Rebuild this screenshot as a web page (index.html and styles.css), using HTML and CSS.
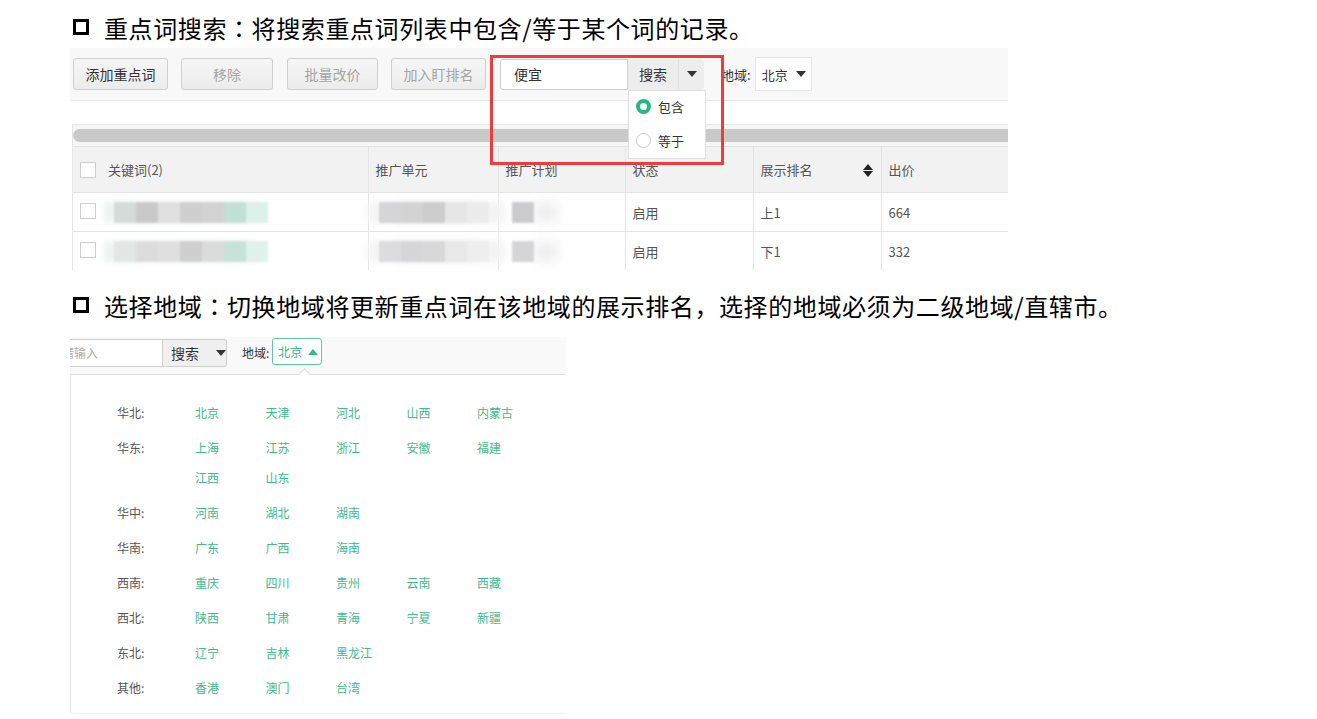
FILE: index.html
```html
<!DOCTYPE html>
<html lang="zh-CN">
<head>
    <meta charset="UTF-8">
    <meta name="viewport" content="width=device-width, initial-scale=1.0">
    <link rel="stylesheet" href="styles.css">
</head>
<body>
<div class="doc">

    <!-- Section 1: keyword search -->
    <h3 class="tip"><span class="tip-box"></span>重点词搜索<span class="colon">：</span>将搜索重点词列表中包含/等于某个词的记录。</h3>

    <div class="shot shot-kw">
        <div class="kw-toolbar">
            <button class="btn btn-add">添加重点词</button>
            <button class="btn btn-remove is-disabled">移除</button>
            <button class="btn btn-price is-disabled">批量改价</button>
            <button class="btn btn-rank is-disabled">加入盯排名</button>

            <div class="search">
                <div class="search-input">便宜</div>
                <div class="search-btn">搜索</div>
                <div class="search-caret"><span class="caret-down"></span></div>
                <!-- match mode menu -->
                <ul class="search-menu">
                    <li><span class="radio is-checked"></span>包含</li>
                    <li><span class="radio"></span>等于</li>
                </ul>
            </div>

            <span class="region-label">地域:</span>
            <div class="region-select">北京<span class="caret-down"></span></div>
        </div>

        <div class="kw-body">
            <div class="hscroll"><div class="hscroll-thumb"></div></div>
            <table class="kw-table">
                <colgroup>
                    <col class="c-kw"><col class="c-unit"><col class="c-plan">
                    <col class="c-state"><col class="c-rank"><col class="c-bid">
                </colgroup>
                <thead>
                    <tr>
                        <th><span class="check"></span>关键词(2)</th>
                        <th>推广单元</th>
                        <th>推广计划</th>
                        <th>状态</th>
                        <th class="sortable">展示排名<span class="sort-icon"></span></th>
                        <th>出价</th>
                    </tr>
                </thead>
                <tbody>
                    <tr>
                        <td><span class="check"></span><span class="mosaic mosaic-kw"></span></td>
                        <td><span class="mosaic mosaic-unit"></span></td>
                        <td><span class="mosaic mosaic-plan"></span></td>
                        <td>启用</td>
                        <td>上1</td>
                        <td>664</td>
                    </tr>
                    <tr>
                        <td><span class="check"></span><span class="mosaic mosaic-kw mosaic-light"></span></td>
                        <td><span class="mosaic mosaic-unit mosaic-light"></span></td>
                        <td><span class="mosaic mosaic-plan mosaic-light"></span></td>
                        <td>启用</td>
                        <td>下1</td>
                        <td>332</td>
                    </tr>
                </tbody>
            </table>
        </div>

        <div class="highlight"></div>
    </div>

    <!-- Section 2: region picker -->
    <h3 class="tip tip-second"><span class="tip-box"></span>选择地域<span class="colon">：</span>切换地域将更新重点词在该地域的展示排名，选择的地域必须为二级地域/直辖市。</h3>

    <div class="shot shot-region">
        <div class="rg-toolbar">
            <div class="rg-input">请输入</div>
            <div class="rg-search">搜索<span class="caret-down"></span></div>
            <span class="rg-label">地域:</span>
            <div class="rg-select">北京<span class="caret-up"></span></div>
        </div>
        <span class="rg-notch"></span>

        <div class="rg-panel">
            <div class="rg-group">
                <span class="rg-name">华北:</span>
                <div class="rg-cities"><a>北京</a><a>天津</a><a>河北</a><a>山西</a><a>内蒙古</a></div>
            </div>
            <div class="rg-group">
                <span class="rg-name">华东:</span>
                <div class="rg-cities"><a>上海</a><a>江苏</a><a>浙江</a><a>安徽</a><a>福建</a><a>江西</a><a>山东</a></div>
            </div>
            <div class="rg-group">
                <span class="rg-name">华中:</span>
                <div class="rg-cities"><a>河南</a><a>湖北</a><a>湖南</a></div>
            </div>
            <div class="rg-group">
                <span class="rg-name">华南:</span>
                <div class="rg-cities"><a>广东</a><a>广西</a><a>海南</a></div>
            </div>
            <div class="rg-group">
                <span class="rg-name">西南:</span>
                <div class="rg-cities"><a>重庆</a><a>四川</a><a>贵州</a><a>云南</a><a>西藏</a></div>
            </div>
            <div class="rg-group">
                <span class="rg-name">西北:</span>
                <div class="rg-cities"><a>陕西</a><a>甘肃</a><a>青海</a><a>宁夏</a><a>新疆</a></div>
            </div>
            <div class="rg-group">
                <span class="rg-name">东北:</span>
                <div class="rg-cities"><a>辽宁</a><a>吉林</a><a>黑龙江</a></div>
            </div>
            <div class="rg-group">
                <span class="rg-name">其他:</span>
                <div class="rg-cities"><a>香港</a><a>澳门</a><a>台湾</a></div>
            </div>
        </div>
    </div>

</div>
</body>
</html>
```

FILE: styles.css
```css
body {
    margin: 0;
    background: #fff;
    font-family: "Noto Sans CJK SC", "Liberation Sans", sans-serif;
    color: #333;
}
.doc {
    padding: 8px 0 0 70px;
}

/* section titles */
.tip {
    display: flex;
    align-items: center;
    margin: 0;
    height: 38px;
    font-size: 24px;
    font-weight: normal;
    letter-spacing: 0.6px;
    color: #000;
    white-space: nowrap;
}
.tip-box {
    width: 10px;
    height: 10px;
    border: 3px solid #000;
    margin: 0 15px 0 3px;
    flex: none;
}
.tip-second {
    margin-top: 16px;
}
/* centred full-width colon */
.colon {
    font-family: "Noto Sans CJK JP", "Noto Sans CJK SC", sans-serif;
}

.shot {
    position: relative;
    overflow: hidden;
}

/* ---------- screenshot 1 ---------- */
.shot-kw {
    width: 938px;
    height: 222px;
    margin-top: 2px;
}
.kw-toolbar {
    display: flex;
    align-items: center;
    height: 52px;
    padding-left: 3px;
    background: #f8f8f8;
    border-bottom: 1px solid #e6e6e6;
    font-size: 14px;
}
.btn {
    height: 32px;
    margin-right: 13px;
    padding: 0;
    font-family: inherit;
    font-size: 14px;
    color: #333;
    background: linear-gradient(#f6f6f6, #ececec);
    border: 1px solid #cfcfcf;
    border-radius: 3px;
}
.btn.is-disabled {
    color: #a5a5a5;
}
.btn-add { width: 95px; }
.btn-remove { width: 92px; margin-right: 14px; }
.btn-price { width: 91px; }
.btn-rank { width: 95px; margin-right: 14px; }

.search {
    position: relative;
    display: flex;
    height: 31px;
}
.search-input {
    width: 113px;
    padding-left: 13px;
    line-height: 29px;
    background: #fff;
    border: 1px solid #d0d0d0;
    border-radius: 3px 0 0 3px;
}
.search-btn {
    width: 50px;
    line-height: 31px;
    text-align: center;
    background: #ededed;
    border-right: 1px solid #e2e2e2;
}
.search-caret {
    display: flex;
    align-items: center;
    justify-content: center;
    width: 25px;
    background: #ededed;
    border-radius: 0 3px 3px 0;
}
.caret-down {
    width: 0;
    height: 0;
    border-left: 5px solid transparent;
    border-right: 5px solid transparent;
    border-top: 6px solid #333;
}
.caret-up {
    width: 0;
    height: 0;
    border-left: 5px solid transparent;
    border-right: 5px solid transparent;
    border-bottom: 6px solid #35b98a;
}
.search-menu {
    position: absolute;
    top: 31px;
    left: 128px;
    width: 76px;
    margin: 0;
    padding: 0;
    list-style: none;
    background: #fff;
    border: 1px solid #e0e0e0;
    z-index: 2;
}
.search-menu li {
    display: flex;
    align-items: center;
    height: 34px;
    padding-left: 7px;
    font-size: 13px;
    color: #333;
}
.search-menu li:first-child {
    margin-top: -1px;
}
.radio {
    box-sizing: border-box;
    width: 15px;
    height: 15px;
    margin-right: 7px;
    border: 1px solid #c8c8c8;
    border-radius: 50%;
    background: #fff;
}
.radio.is-checked {
    border: 4px solid #25b884;
}

.region-label {
    margin-left: 17px;
    font-size: 13px;
    color: #333;
}
.region-select {
    display: flex;
    align-items: center;
    gap: 8px;
    box-sizing: border-box;
    width: 57px;
    height: 34px;
    margin-left: 4px;
    padding-left: 6px;
    font-size: 13px;
    background: #fff;
    border: 1px solid #e6e6e6;
}

.kw-body {
    margin: 23px 0 0 2px;
    border-left: 1px solid #e6e6e6;
}
.hscroll {
    height: 22px;
    padding-top: 4px;
    box-sizing: border-box;
    background: #f6f6f6;
    border-top: 1px solid #e9e9e9;
}
.hscroll-thumb {
    height: 13px;
    width: 960px;
    border-radius: 7px;
    background: #c9c9c9;
}

.kw-table {
    border-collapse: collapse;
    table-layout: fixed;
    width: 1000px;
    font-size: 13px;
    color: #555;
}
.c-kw { width: 295px; }
.c-unit { width: 130px; }
.c-plan { width: 127px; }
.c-state { width: 128px; }
.c-rank { width: 128px; }
.c-bid { width: 192px; }
.kw-table th,
.kw-table td {
    padding: 0 7px;
    text-align: left;
    font-weight: normal;
    white-space: nowrap;
    border-right: 1px solid #e4e4e4;
    border-bottom: 1px solid #e4e4e4;
}
.kw-table th {
    height: 45px;
    background: #f2f2f2;
    border-top: 1px solid #e4e4e4;
}
.kw-table td {
    height: 38px;
    background: #fff;
}
.check {
    display: inline-block;
    box-sizing: border-box;
    width: 16px;
    height: 16px;
    margin-right: 12px;
    vertical-align: -3px;
    background: #fff;
    border: 1px solid #cdcdcd;
}
.sortable {
    position: relative;
}
.sort-icon {
    position: absolute;
    right: 8px;
    top: 17px;
    width: 0;
    height: 0;
    border-left: 5px solid transparent;
    border-right: 5px solid transparent;
    border-bottom: 6px solid #222;
}
.sort-icon::after {
    content: "";
    position: absolute;
    left: -5px;
    top: 7px;
    border-left: 5px solid transparent;
    border-right: 5px solid transparent;
    border-top: 6px solid #222;
}

/* blurred cell contents */
.mosaic {
    display: inline-block;
    height: 21px;
    vertical-align: middle;
    filter: blur(0.8px);
}
.mosaic-kw {
    width: 154px;
    margin-left: 6px;
    background: linear-gradient(to right,
        #d3dcd9 0 22px, #c9c9c9 22px 44px, #e0e0e0 44px 66px, #cfcfcf 66px 88px,
        #d2d2d2 88px 110px, #c2e0d6 110px 132px, #dbf1e9 132px 154px);
    box-shadow: -10px 0 6px #eef3f1;
}
.mosaic-kw.mosaic-light {
    background: linear-gradient(to right,
        #e2e6e5 0 22px, #dcdcdc 22px 44px, #dfdfdf 44px 66px, #cfcfcf 66px 88px,
        #dbdbdb 88px 110px, #c6e2d9 110px 132px, #dff2eb 132px 154px);
}
.mosaic-unit {
    width: 110px;
    margin-left: 3px;
    background: linear-gradient(to right,
        #d5d5d7 0 22px, #d3d3d4 22px 44px, #cdcdcd 44px 66px, #e6e6e6 66px 88px, #ececec 88px 110px);
    box-shadow: 16px 0 10px #f3f3f3, -12px 0 8px #f4f4f4;
}
.mosaic-unit.mosaic-light {
    background: linear-gradient(to right,
        #dcdcde 0 22px, #d6d6d8 22px 44px, #d8d8d8 44px 66px, #e8e8e8 66px 88px, #eeeeee 88px 110px);
}
.mosaic-plan {
    width: 22px;
    margin-left: 6px;
    background: #cbcbcd;
    box-shadow: 24px 0 12px #eeeeee;
}
.mosaic-plan.mosaic-light {
    background: #d5d5d7;
}

.highlight {
    position: absolute;
    left: 420px;
    top: 7px;
    width: 228px;
    height: 104px;
    border: 3px solid #f13b3b;
    z-index: 3;
}

/* ---------- screenshot 2 ---------- */
.shot-region {
    width: 496px;
    height: 381px;
    margin-top: 13px;
}
.rg-toolbar {
    display: flex;
    align-items: flex-start;
    height: 38px;
    padding-top: 1px;
    box-sizing: border-box;
    margin-left: -12px;
    background: #f9f9f9;
    border-bottom: 1px solid #e2e2e2;
    font-size: 12px;
    white-space: nowrap;
}
.rg-input {
    box-sizing: border-box;
    width: 105px;
    height: 28px;
    margin-top: 1px;
    padding-left: 3px;
    line-height: 26px;
    color: #aaa;
    background: #fff;
    border: 1px solid #cfcfcf;
}
.rg-search {
    display: flex;
    align-items: center;
    gap: 17px;
    flex: none;
    box-sizing: border-box;
    width: 64px;
    height: 28px;
    margin-top: 1px;
    padding-left: 8px;
    font-size: 14px;
    color: #333;
    background: #f0f0f0;
    border: 1px solid #cfcfcf;
    border-left: none;
    border-radius: 0 3px 3px 0;
}
.rg-label {
    margin: 6px 0 0 15px;
    color: #333;
}
.rg-select {
    display: flex;
    align-items: center;
    gap: 6px;
    box-sizing: border-box;
    width: 50px;
    height: 27px;
    margin-left: 3px;
    padding-left: 5px;
    color: #35b98a;
    background: #fff;
    border: 1px solid #5ccaa0;
    border-radius: 3px;
}
.rg-notch {
    position: absolute;
    left: 230px;
    top: 33px;
    width: 8px;
    height: 8px;
    background: #fff;
    border-left: 1px solid #dcdcdc;
    border-top: 1px solid #dcdcdc;
    transform: rotate(45deg);
}
.rg-panel {
    height: 339px;
    padding: 23px 0 0 46px;
    box-sizing: border-box;
    border-left: 1px solid #e0e0e0;
    border-bottom: 1px solid #f0f0f0;
    border-radius: 0 0 0 4px;
    font-size: 12px;
}
.rg-group {
    display: flex;
    margin-bottom: 5px;
    line-height: 30px;
}
.rg-name {
    width: 78px;
    flex: none;
    color: #555;
}
.rg-cities {
    display: flex;
    flex-wrap: wrap;
    width: 355px;
}
.rg-cities a {
    width: 70.5px;
    color: #3fba8c;
}
```
